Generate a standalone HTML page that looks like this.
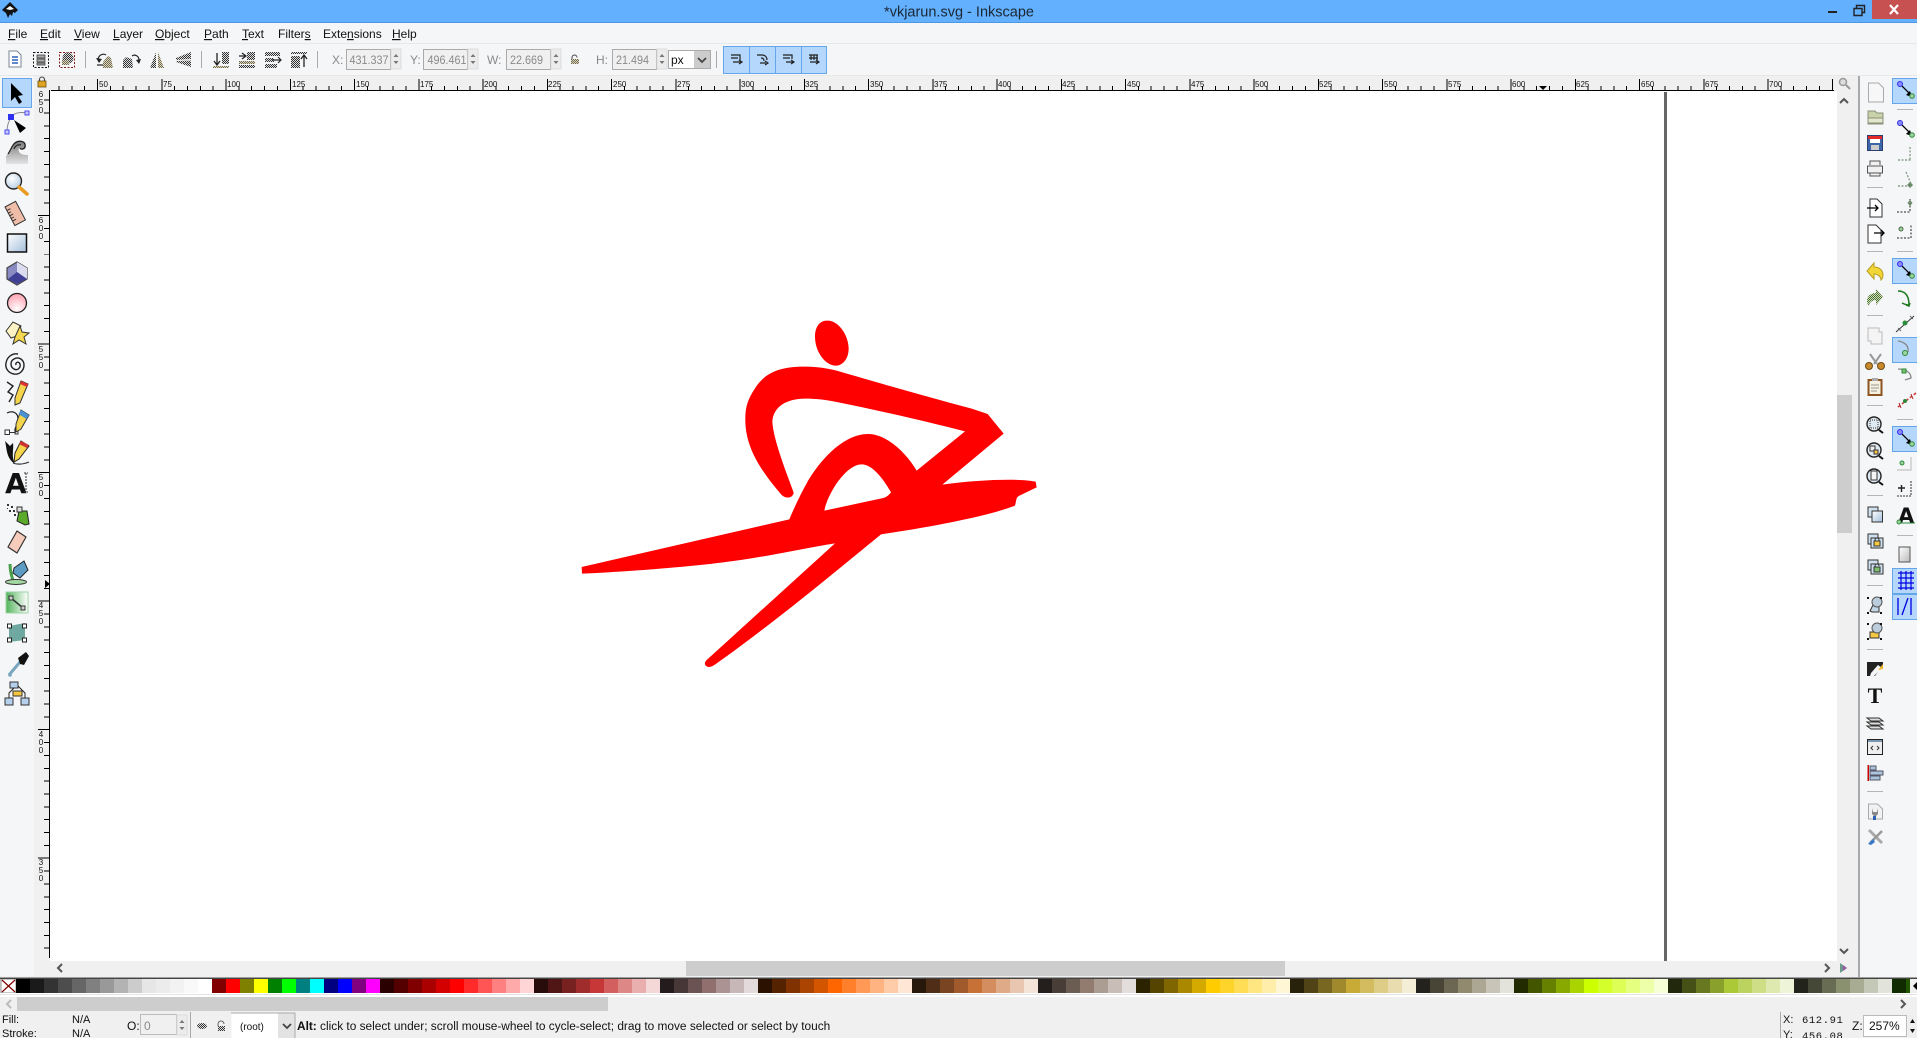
<!DOCTYPE html>
<html><head><meta charset="utf-8"><title>*vkjarun.svg - Inkscape</title>
<style>
html,body{margin:0;padding:0;width:1917px;height:1038px;overflow:hidden;background:#f0f0f0}
#pal{position:absolute;left:16px;top:979px;height:14px;width:1894px;display:flex;overflow:hidden}
#pal i{flex:0 0 14px;height:14px;display:block}
svg{position:absolute;left:0;top:0}
text{font-family:"Liberation Sans",sans-serif}
.m{font-size:12px;fill:#111}
.l{font-size:12px;fill:#8a8a8a}
.v{font-size:12px;fill:#8a8a8a}
.r{font-size:8px;fill:#111}
.s{font-size:11px;fill:#111}
.mono{font-family:"Liberation Mono",monospace;font-size:10.5px;fill:#111;letter-spacing:.6px}
</style></head><body>
<svg width="1917" height="1038" viewBox="0 0 1917 1038" xmlns="http://www.w3.org/2000/svg">
<defs>
<pattern id="d" width="2" height="2" patternUnits="userSpaceOnUse"><rect width="1" height="1" fill="#333"/><rect x="1" y="1" width="1" height="1" fill="#333"/><rect x="1" width="1" height="1" fill="#ddd"/><rect y="1" width="1" height="1" fill="#ddd"/></pattern>
<pattern id="dy" width="2" height="2" patternUnits="userSpaceOnUse"><rect width="2" height="2" fill="#e6d9a8"/><rect width="1" height="1" fill="#666"/><rect x="1" y="1" width="1" height="1" fill="#666"/></pattern>
<pattern id="dg" width="2" height="2" patternUnits="userSpaceOnUse"><rect width="2" height="2" fill="#cfe3b5"/><rect width="1" height="1" fill="#4c6b3a"/><rect x="1" y="1" width="1" height="1" fill="#4c6b3a"/></pattern>
<linearGradient id="gb" x1="0" y1="0" x2="1" y2="1"><stop offset="0" stop-color="#fff"/><stop offset="1" stop-color="#a3bfdb"/></linearGradient>
<linearGradient id="gg" x1="0" y1="0" x2="0" y2="1"><stop offset="0" stop-color="#777"/><stop offset="1" stop-color="#e4e4e4"/></linearGradient>
<linearGradient id="gw" x1="0" y1="0" x2="1" y2="1"><stop offset="0" stop-color="#fff"/><stop offset="1" stop-color="#bbb"/></linearGradient>
<linearGradient id="gr" x1="0" y1="0" x2="1" y2="0"><stop offset="0" stop-color="#52b35c"/><stop offset="1" stop-color="#fff"/></linearGradient>
<radialGradient id="gp" cx=".5" cy=".8" r=".8"><stop offset="0" stop-color="#fff"/><stop offset="1" stop-color="#ff9fae"/></radialGradient>
<radialGradient id="gl" cx=".4" cy=".35" r=".7"><stop offset="0" stop-color="#fff"/><stop offset="1" stop-color="#b5cde2"/></radialGradient>
<clipPath id="chr"><rect x="51" y="76" width="1783" height="15"/></clipPath>
<clipPath id="cvr"><rect x="34" y="91" width="16" height="869"/></clipPath>
<g id="hu" shape-rendering="crispEdges"><path stroke="#000" fill="none" d="M0 79v11M64.25 79v11M12.85 86v4M25.7 86v4M38.55 86v4M51.4 86v4M77.1 86v4M89.95 86v4M102.8 86v4M115.65 86v4"/></g>
<g id="vu" shape-rendering="crispEdges"><path stroke="#000" fill="none" d="M38 0h11M44 12.85h5M44 25.7h5M44 38.55h5M44 51.4h5M44 64.25h5M44 77.1h5M44 89.95h5M44 102.8h5M44 115.65h5"/></g>
<g id="snap"><line x1="-6" y1="-7" x2="4" y2="3" stroke="#000" stroke-width="1.300"/><path d="M6 6l-6-2 4-4z" fill="#000"/><circle cx="-6" cy="-7" r="2.500" fill="#8a8aff" stroke="#3030e0"/><circle cx="6" cy="5" r="2.300" fill="#9fd39f" stroke="#2c8a3c"/></g>
<g id="sepH"><rect x="-8" y="0" width="16" height="1" fill="#b5b5b5"/></g>
<g id="spin"><rect width="10" height="20" fill="#ececec" stroke="#dcdcdc"/><path d="M2.500 8l2.500-3 2.500 3zM2.500 12l2.500 3 2.500-3z" fill="#777"/></g>
</defs>

<!-- base regions -->
<rect width="1917" height="1038" fill="#f0f0f0"/>
<rect width="1917" height="22" fill="#62b0fe"/>
<rect y="22" width="1917" height="1" fill="#4f97e0"/>
<rect y="23" width="1917" height="52" fill="#f5f6f7"/>
<rect y="43" width="1917" height="1" fill="#e7e8e9"/>
<rect y="75" width="1917" height="1" fill="#e8e8e8"/>
<rect x="0" y="76" width="34" height="900" fill="#f5f6f7"/>
<rect x="1859" y="76" width="58" height="902" fill="#f5f6f7"/>
<rect x="1858" y="76" width="2" height="902" fill="#a9a9a9"/>
<rect x="50" y="91" width="1787" height="870" fill="#fff"/>
<rect x="49" y="90" width="1" height="868" fill="#000"/>
<rect x="51" y="90" width="1783" height="1" fill="#000"/>
<rect x="1664" y="92" width="3" height="869" fill="#666"/>

<!-- scrollbars -->
<rect x="1837" y="395" width="15" height="138" fill="#cdcdcd"/>
<rect x="686" y="961" width="599" height="15" fill="#cdcdcd"/>
<path d="M1840 103l4-4 4 4M1840 949l4 4 4-4M62 964l-4 4 4 4M1825 964l4 4-4 4" fill="none" stroke="#555" stroke-width="2"/>
<circle cx="1843" cy="82" r="3.500" fill="#ddd" stroke="#999" stroke-width="1.500"/><path d="M1846 85l4 4" stroke="#999" stroke-width="2"/>
<path d="M1840 963l7 5-7 5z" fill="#6a9a8a"/><path d="M1843 965l4 3-4 3z" fill="#9a5aa0"/>

<!-- palette -->
<rect y="977" width="1917" height="1" fill="#a0a0a0"/>
<rect y="978" width="1917" height="1" fill="#444"/>
<rect x="1" y="979" width="15" height="14" fill="#fff"/>
<path d="M2 980l13 12M15 980L2 992" stroke="#800000" stroke-width="1.200"/>
<rect x="1" y="979" width="15" height="14" fill="none" stroke="#444" stroke-width=".6"/>
<rect y="993" width="1917" height="4" fill="#fff"/>
<rect y="994" width="1917" height="1" fill="#e4e4e4"/>
<path d="M1917 982l-4 4 4 4z" fill="#000"/>
<rect x="17" y="997" width="591" height="14" fill="#cdcdcd"/>
<path d="M11 1000l-4 4 4 4" fill="none" stroke="#bbb" stroke-width="2"/>
<path d="M1901 1000l4 4-4 4" fill="none" stroke="#555" stroke-width="2"/>

<!-- title -->
<path d="M10 2L18 10 15 13 13 12 12 16 10 14 8 18 6 13 2 10z" fill="#111"/><path d="M6 9l4-3 4 3-4 1z" fill="#fff"/>
<text x="959" y="16.500" text-anchor="middle" style="font-size:14.500px;fill:#1b2733">*vkjarun.svg - Inkscape</text>
<rect x="1828" y="11" width="9" height="2" fill="#222"/>
<path d="M1854 8.500h8v7h-8zM1856.500 8.500v-3h8v7h-3" fill="none" stroke="#222" stroke-width="1.400"/>
<rect x="1872" width="45" height="19" fill="#c75050"/>
<path d="M1890 5l8 9M1898 5l-8 9" stroke="#fff" stroke-width="2.200"/>

<!-- menu -->
<text class="m" x="8" y="38"><tspan text-decoration="underline">F</tspan>ile</text>
<text class="m" x="40" y="38"><tspan text-decoration="underline">E</tspan>dit</text>
<text class="m" x="74" y="38"><tspan text-decoration="underline">V</tspan>iew</text>
<text class="m" x="113" y="38"><tspan text-decoration="underline">L</tspan>ayer</text>
<text class="m" x="155" y="38"><tspan text-decoration="underline">O</tspan>bject</text>
<text class="m" x="204" y="38"><tspan text-decoration="underline">P</tspan>ath</text>
<text class="m" x="242" y="38"><tspan text-decoration="underline">T</tspan>ext</text>
<text class="m" x="278" y="38">Filter<tspan text-decoration="underline">s</tspan></text>
<text class="m" x="323" y="38">Exte<tspan text-decoration="underline">n</tspan>sions</text>
<text class="m" x="392" y="38"><tspan text-decoration="underline">H</tspan>elp</text>

<!-- top toolbar icons -->
<path d="M9 51h8l4 4v12H9z" fill="#fff" stroke="#7a8794"/><path d="M12 57h6M12 60h6M12 63h6" stroke="#2a62b8" stroke-width="1.500"/>
<rect x="33.500" y="52.500" width="15" height="15" fill="none" stroke="#111" stroke-dasharray="2 1.500"/>
<path d="M37 55h8v3h-8zM37 59h8v3h-8zM37 63h8v2h-8z" fill="#aaa" stroke="#333" stroke-width=".7"/>
<rect x="59.500" y="52.500" width="15" height="15" fill="none" stroke="#8a1c1c" stroke-dasharray="2 1.500"/>
<circle cx="68" cy="58" r="5.500" fill="url(#d)"/><rect x="62" y="60" width="7" height="5" fill="url(#dy)"/>
<rect x="85" y="51" width="1" height="17" fill="#aaa"/>
<path d="M103 68h10l-2-10-3-2-5 6z" fill="url(#dy)"/><path d="M98 59c1-4 5-6 8-4" fill="none" stroke="#222" stroke-width="1.200"/><path d="M96 58l3 5 3-4z" fill="#222"/><path d="M97 65h6" stroke="#333" stroke-width="1.300"/>
<path d="M123 68h10l-1-9-6-2-3 3z" fill="url(#d)"/><path d="M132 56c3-2 7 0 7 4" fill="none" stroke="#222" stroke-width="1.200"/><path d="M136 60l3 4 2-5z" fill="#222"/>
<path d="M156 52v16l-6 0z" fill="url(#d)"/><path d="M158 52v16l6 0z" fill="url(#dy)"/>
<path d="M191 52L176 58v2l15-1z" fill="url(#d)"/><path d="M191 60.500L176 61v1l15 5z" fill="url(#d)"/>
<rect x="201" y="51" width="1" height="17" fill="#aaa"/>
<path d="M217 53v11M214 61l3 4 3-4" stroke="#222" fill="none" stroke-width="1.300"/><rect x="213" y="66" width="16" height="2" fill="url(#dy)"/><rect x="222" y="52" width="7" height="12" fill="url(#d)"/>
<path d="M239 56h6M242 53l4 3-4 3" stroke="#222" fill="none" stroke-width="1.200"/><rect x="247" y="52" width="8" height="8" fill="url(#d)"/><rect x="239" y="61" width="16" height="3" fill="url(#dy)"/><rect x="239" y="65" width="16" height="3" fill="url(#d)"/>
<rect x="265" y="52" width="15" height="4" fill="url(#d)"/><rect x="265" y="58" width="9" height="4" fill="url(#d)"/><rect x="265" y="64" width="12" height="4" fill="url(#d)"/><path d="M272 60h8M278 57l3 3-3 3" stroke="#222" fill="none" stroke-width="1.200"/>
<rect x="291" y="52" width="16" height="2" fill="url(#d)"/><rect x="291" y="56" width="9" height="12" fill="url(#d)"/><path d="M304 67V56M301 59l3-4 3 4" stroke="#222" fill="none" stroke-width="1.300"/>
<rect x="317" y="51" width="1" height="17" fill="#aaa"/>

<text class="l" x="332" y="64">X:</text>
<rect x="346.500" y="49.500" width="44" height="20" fill="#f0f0f0" stroke="#aaa"/><text class="v" x="349.500" y="64" textLength="39" lengthAdjust="spacingAndGlyphs">431.337</text><use href="#spin" x="391" y="49"/>
<text class="l" x="410" y="64">Y:</text>
<rect x="423.500" y="49.500" width="44" height="20" fill="#f0f0f0" stroke="#aaa"/><text class="v" x="427.500" y="64" textLength="39" lengthAdjust="spacingAndGlyphs">496.461</text><use href="#spin" x="468" y="49"/>
<text class="l" x="487" y="64">W:</text>
<rect x="506.500" y="49.500" width="44" height="20" fill="#f0f0f0" stroke="#aaa"/><text class="v" x="510" y="64" textLength="33" lengthAdjust="spacingAndGlyphs">22.669</text><use href="#spin" x="551" y="49"/>
<path d="M572 59v-1.500a2.500 2.500 0 0 1 5 0" fill="none" stroke="#444"/><rect x="571" y="59" width="8" height="5" fill="url(#dy)"/>
<text class="l" x="596" y="64">H:</text>
<rect x="612.500" y="49.500" width="44" height="20" fill="#f0f0f0" stroke="#aaa"/><text class="v" x="616" y="64" textLength="33" lengthAdjust="spacingAndGlyphs">21.494</text><use href="#spin" x="657" y="49"/>
<rect x="668.500" y="50.500" width="42" height="18" fill="#fff" stroke="#aaa"/><text x="671" y="64" style="font-size:12px;fill:#111">px</text>
<rect x="694" y="51" width="16" height="17" fill="#ccc"/><path d="M698 58l4 4 4-4" fill="none" stroke="#444" stroke-width="1.800"/>
<rect x="716" y="51" width="1" height="17" fill="#aaa"/>
<g fill="#b5d7fb" stroke="#63a6eb"><rect x="723.500" y="46.500" width="26" height="27"/><rect x="749.500" y="46.500" width="26" height="27"/><rect x="775.500" y="46.500" width="26" height="27"/><rect x="801.500" y="46.500" width="25" height="27"/></g>
<g stroke="#222" fill="none" stroke-width="1.200">
<path d="M731 55h9v5M731 58h7M733 62h8M739 60l3 2-3 2"/>
<path d="M757 55h5c3 0 5 2 5 5M761 58c2 0 3 1 3 3M760 63h6M765 61l3 2-3 2"/>
<path d="M783 55h9v4M783 58h7M786 62h7M791 60l3 2-3 2"/>
<path d="M809 55h9M809 58h9M811 55v5M814 55v5M817 55v5M810 62h8M816 60l3 2-3 2"/>
</g>

<!-- rulers -->
<g clip-path="url(#chr)">
<use href="#hu" x="-31"/><use href="#hu" x="97.500"/><use href="#hu" x="226"/><use href="#hu" x="354.500"/><use href="#hu" x="483"/><use href="#hu" x="611.500"/><use href="#hu" x="740"/><use href="#hu" x="868.500"/><use href="#hu" x="997"/><use href="#hu" x="1125.500"/><use href="#hu" x="1254"/><use href="#hu" x="1382.500"/><use href="#hu" x="1511"/><use href="#hu" x="1639.500"/><use href="#hu" x="1768"/>
<text class="r" x="99" y="87">50</text><text class="r" x="163" y="87">75</text><text class="r" x="227" y="87">100</text><text class="r" x="292" y="87">125</text><text class="r" x="356" y="87">150</text><text class="r" x="420" y="87">175</text><text class="r" x="484" y="87">200</text><text class="r" x="548" y="87">225</text><text class="r" x="613" y="87">250</text><text class="r" x="677" y="87">275</text><text class="r" x="741" y="87">300</text><text class="r" x="805" y="87">325</text><text class="r" x="870" y="87">350</text><text class="r" x="934" y="87">375</text><text class="r" x="998" y="87">400</text><text class="r" x="1062" y="87">425</text><text class="r" x="1127" y="87">450</text><text class="r" x="1191" y="87">475</text><text class="r" x="1255" y="87">500</text><text class="r" x="1319" y="87">525</text><text class="r" x="1384" y="87">550</text><text class="r" x="1448" y="87">575</text><text class="r" x="1512" y="87">600</text><text class="r" x="1576" y="87">625</text><text class="r" x="1641" y="87">650</text><text class="r" x="1705" y="87">675</text><text class="r" x="1769" y="87">700</text><text class="r" x="1834" y="87">725</text>
</g>
<path d="M1539 86h8l-4 4z" fill="#000"/>
<g clip-path="url(#cvr)">
<use href="#vu" y="87.200"/><use href="#vu" y="215.700"/><use href="#vu" y="344.200"/><use href="#vu" y="472.700"/><use href="#vu" y="601.200"/><use href="#vu" y="729.700"/><use href="#vu" y="858.200"/>
<g text-anchor="middle">
<text class="r" x="41" y="97">6</text><text class="r" x="41" y="105">5</text><text class="r" x="41" y="113">0</text>
<text class="r" x="41" y="223">6</text><text class="r" x="41" y="231">0</text><text class="r" x="41" y="239">0</text>
<text class="r" x="41" y="352">5</text><text class="r" x="41" y="360">5</text><text class="r" x="41" y="368">0</text>
<text class="r" x="41" y="480">5</text><text class="r" x="41" y="488">0</text><text class="r" x="41" y="496">0</text>
<text class="r" x="41" y="608">4</text><text class="r" x="41" y="616">5</text><text class="r" x="41" y="624">0</text>
<text class="r" x="41" y="737">4</text><text class="r" x="41" y="745">0</text><text class="r" x="41" y="753">0</text>
<text class="r" x="41" y="865">3</text><text class="r" x="41" y="873">5</text><text class="r" x="41" y="881">0</text>
</g>
</g>
<path d="M45 580l5 4-5 4z" fill="#000"/>
<rect x="38" y="81" width="8" height="6" fill="#e0a320" stroke="#6a4a10" stroke-width=".8"/><path d="M39.500 81v-1.500a2.500 2.500 0 0 1 5 0V81" fill="none" stroke="#444" stroke-width="1.100"/>

<!-- logo -->
<g transform="translate(560 300) scale(.33333)" fill="#ff0000">
<path d="M800 62C830 58 865 100 866 145C866 180 845 198 825 197C795 195 765 155 765 110C765 80 780 62 800 62Z"/>
<path fill-rule="evenodd" d="M700 575C680 520 640 420 637 365C640 320 680 296 735 296C770 296 800 300 830 306C950 330 1090 362 1215 394L1070 512C1040 460 980 402 925 402C850 402 780 480 740 550C715 595 700 630 688 658L65 801L66 821C200 815 400 800 520 783C620 770 730 745 825 730L440 1080C430 1090 435 1100 447 1101C455 1100 460 1097 470 1090C640 970 820 820 963 703C1100 683 1280 650 1365 617L1370 595C1372 590 1376 588 1380 586L1430 562L1427 545C1380 535 1260 538 1147 554L1331 401L1283 342L1235 326C1100 290 960 250 830 212C790 202 760 200 730 200C650 200 610 225 585 265C565 295 555 320 556 360C556 440 600 510 665 585C675 595 695 597 701 580ZM793 632C805 575 860 493 905 493C940 493 975 545 993 577C985 587 978 592 970 594Z"/>
</g>

<!-- left toolbox -->
<rect x="2.500" y="78.500" width="29" height="29" fill="#b5d7fb" stroke="#63a6eb"/>
<path d="M11 83L11 101 15 97 19 104 22 102 18 96 23 95Z" fill="#000"/>
<path d="M11 117C15 112 21 112 27 113M11 118C8 122 7 127 7 132" fill="none" stroke="#888"/>
<rect x="8" y="114" width="6" height="6" fill="#3030f0"/><rect x="25" y="111" width="4" height="4" fill="#c9c9ff" stroke="#4a4af0"/><rect x="5" y="130" width="4" height="4" fill="#c9c9ff" stroke="#4a4af0"/>
<path d="M14 120L26 128 20 133Z" fill="#000"/>
<path d="M6 164V156C10 152 11 145 15 142C19 139 26 141 26 146C26 150 21 151 20 148C18 148 18 151 20 153C22 155 26 155 28 155V164Z" fill="url(#gg)"/>
<path d="M8 154C11 150 12 145 15 143C19 140 26 141 25 146C25 149 21 150 20 148M14 149C15 146 18 144 21 145" fill="none" stroke="#222" stroke-width="1.300"/>
<circle cx="13.500" cy="181" r="8" fill="url(#gl)" stroke="#222" stroke-width="1.400"/><path d="M19 187l8 7" stroke="#e89b20" stroke-width="3.500" stroke-linecap="round"/>
<g transform="rotate(-28 15 213)"><rect x="9" y="203" width="12" height="21" fill="#efbda8" stroke="#333"/><path d="M9 207h4M9 210h3M9 213h4M9 216h3M9 219h4" stroke="#333"/></g>
<rect x="7.500" y="234" width="19" height="18" fill="url(#gb)" stroke="#111" stroke-width="1.500"/>
<path d="M17 262L27 268V279L17 285 7 279V268Z" fill="#8b8bc4" stroke="#444" stroke-width="1.200"/><path d="M17 262L27 268V279L17 272Z" fill="#dcdcf0"/><path d="M8 279L17 272 27 279 17 284Z" fill="#3f3f96"/>
<circle cx="17" cy="303" r="9.500" fill="url(#gp)" stroke="#222" stroke-width="1.300"/>
<path d="M6 331L13 322 21 326 17 336 11 338Z" fill="#fcf2c4" stroke="#333"/><path d="M20 326L22 332 29 333 24 337 26 344 19 340 13 344 15 337Z" fill="#f5d84f" stroke="#333"/>
<path d="M16 365c-1-3 3-4 4-1 1 4-3 7-6 5-4-2-4-8 0-10 5-3 10 1 10 6 0 6-5 10-10 9-6-1-9-6-8-11 1-6 6-10 12-9" fill="none" stroke="#222" stroke-width="1.400"/>
<path d="M7 382l6 4-5 6 5 3-4 7" fill="none" stroke="#222" stroke-width="1.400"/><path d="M21 381l7 3-8 19-5 2 0-7z" fill="#f3d44c" stroke="#333"/><path d="M21 381l7 3-1 3-7-3z" fill="#d33"/>
<path d="M7 413C13 410 18 413 18 419C18 425 14 428 15 431" fill="none" stroke="#222" stroke-width="1.200"/><rect x="5" y="430" width="4.500" height="4.500" fill="#fff" stroke="#333"/><rect x="15" y="431" width="3" height="3" fill="#fff" stroke="#333"/><path d="M9 432.500h6" stroke="#333"/>
<path d="M21 410l8 5-8 14-5 3 0-8z" fill="#f3d44c" stroke="#333"/><path d="M21 410l8 5-2.500 4-8-5z" fill="#4a8fd0"/>
<path d="M5 441C7 449 6 458 15 464C11 456 14 450 13 443L10 446Z" fill="#111"/><path d="M21 441l8 5-10 13-5 3 1-9z" fill="#f3d44c" stroke="#222"/><path d="M21 441l8 4-2 3-8-4z" fill="#c33"/><path d="M13 463c5 2 11 1 16-1" fill="none" stroke="#333" stroke-width="1.200"/>
<text x="5" y="493" style="font-family:'DejaVu Sans',sans-serif;font-weight:700;font-size:28px;fill:#111">A</text>
<path d="M26 473v19M24 473h4M24 492h4" stroke="#333" stroke-dasharray="2 1"/>
<path d="M19 511h8l2 13-4 1-8-4z" fill="#5caa2c" stroke="#222"/><rect x="17" y="507" width="5" height="5" fill="#ddd" stroke="#333"/>
<g fill="#333"><rect x="7" y="504" width="2" height="2"/><rect x="11" y="506" width="2" height="2"/><rect x="9" y="510" width="2" height="2"/><rect x="13" y="510" width="2" height="2"/><rect x="7" y="508" width="1" height="1"/><rect x="14" y="514" width="2" height="2"/></g>
<path d="M17 531L26 537 17 553 8 547Z" fill="#f6ccbc" stroke="#333" stroke-width="1.200" stroke-linejoin="round"/>
<path d="M14 568L24 561 28 570 20 578 13 573Z" fill="#5f9cc4" stroke="#222"/><path d="M10 564C10 572 12 578 14 583" fill="none" stroke="#4aa04a" stroke-width="3"/><ellipse cx="16" cy="582" rx="10.500" ry="2.500" fill="#a3d8a3" stroke="#333"/>
<rect x="6" y="592" width="22" height="21" fill="url(#gr)" stroke="#9fd4a4"/><path d="M11 598L23 608" stroke="#333" stroke-width="1.500"/><rect x="9" y="596" width="4" height="4" fill="#ccc" stroke="#333"/><rect x="21" y="606" width="4" height="4" fill="#ccc" stroke="#333"/>
<path d="M9 626L25 623 25 640 9 642Z" fill="#6fa8a0"/><g fill="#fff" stroke="#222"><rect x="7.500" y="624" width="4" height="4"/><rect x="22.500" y="624" width="4" height="4"/><rect x="7.500" y="638" width="4" height="4"/><rect x="22.500" y="638" width="4" height="4"/></g>
<path d="M9 675L20 662" stroke="#7aa5bf" stroke-width="3"/><circle cx="10" cy="675" r="1.800" fill="#7aa5bf"/><path d="M18 658L26 652 29 656 24 665 20 664Z" fill="#111"/>
<rect x="10" y="682" width="8" height="6" fill="#b5d0ec" stroke="#333"/><rect x="5" y="698" width="8" height="7" fill="#b5d0ec" stroke="#333"/><rect x="21" y="698" width="8" height="7" fill="#b5d0ec" stroke="#333"/><rect x="13" y="691" width="9" height="5" fill="#f5c842" stroke="#333"/><path d="M9 698V693L14 688M25 698V693L18 686" fill="none" stroke="#222"/>

<!-- right commands -->
<path d="M1868.500 83h10l5 5v14h-15z" fill="#f7f7f7" stroke="#aaa"/>
<path d="M1868 111h7l2 2h6v11h-15z" fill="#c8d2a8" stroke="#8c9078"/><path d="M1868 118h15v5h-15z" fill="#e2e6cc" stroke="#8c9078"/>
<rect x="1867.500" y="135.500" width="15" height="15" fill="#3d66a8" stroke="#2a3f70"/><rect x="1868" y="136" width="14" height="3" fill="#e32a2a"/><rect x="1870" y="139" width="10" height="4" fill="#fff"/><rect x="1871" y="145" width="8" height="5" fill="#ccc"/>
<path d="M1870 165v-4h10v4M1867.500 166h15v7h-15zM1870 173v3h10v-3" fill="#f0f0f0" stroke="#555"/>
<use href="#sepH" x="1875" y="187"/>
<path d="M1870 199h7l5 5v13h-12z" fill="#fff" stroke="#333"/><path d="M1867 208h11M1875 205l3 3-3 3" stroke="#000" stroke-width="1.300" fill="none"/>
<path d="M1868 225h8l5 5v13h-13z" fill="#fff" stroke="#333"/><path d="M1874 233h10M1881 230l3 3-3 3" stroke="#000" stroke-width="1.300" fill="none"/>
<use href="#sepH" x="1875" y="251"/>
<path d="M1867 271l7-8v4c5 0 9 3 9 8 0 2-1 4-2 5 0-3-3-6-7-6v5z" fill="#f2d637" stroke="#b79d20"/>
<path d="M1883 297l-7-8v4c-5 0-9 3-9 8 0 2 1 4 2 5 0-3 3-6 7-6v5z" fill="url(#dg)"/>
<use href="#sepH" x="1875" y="315"/>
<path d="M1868 328h11v4h3v12h-11v-3h-3z" fill="#f4f4f4" stroke="#bbb"/>
<path d="M1870 354l7 10M1881 354l-7 10" stroke="#999" stroke-width="2"/><circle cx="1869" cy="366" r="3.500" fill="#c98a2a" stroke="#6b4a18"/><circle cx="1881" cy="366" r="3.500" fill="#c98a2a" stroke="#6b4a18"/>
<rect x="1868.500" y="380" width="13" height="15" fill="#f5f0e0" stroke="#8c5420" stroke-width="2"/><rect x="1872" y="378" width="6" height="3" fill="#aaa"/><path d="M1871 385h8M1871 388h8M1871 391h6" stroke="#999"/>
<use href="#sepH" x="1875" y="405"/>
<circle cx="1874" cy="424" r="7" fill="#dfe9f2" stroke="#222" stroke-width="1.400"/><rect x="1870" y="420" width="8" height="8" fill="none" stroke="#333" stroke-dasharray="1 1"/><path d="M1879 430l4 3" stroke="#111" stroke-width="2"/>
<circle cx="1874" cy="450" r="7" fill="#dfe9f2" stroke="#222" stroke-width="1.400"/><rect x="1870" y="446" width="5" height="5" fill="#eee" stroke="#333"/><rect x="1874" y="450" width="4" height="4" fill="#f5c842" stroke="#333"/><path d="M1879 456l4 3" stroke="#111" stroke-width="2"/>
<circle cx="1874" cy="476" r="7" fill="#dfe9f2" stroke="#222" stroke-width="1.400"/><rect x="1871" y="471" width="6" height="9" fill="#f5f5f5" stroke="#333"/><path d="M1879 482l4 3" stroke="#111" stroke-width="2"/>
<use href="#sepH" x="1875" y="495"/>
<rect x="1868" y="507" width="10" height="10" fill="#cfe0ef" stroke="#333"/><rect x="1872" y="511" width="10.500" height="11" fill="url(#gb)" stroke="#333"/>
<rect x="1868" y="534" width="10" height="10" fill="#cfe0ef" stroke="#333"/><rect x="1871" y="538" width="12" height="10" fill="#cfe0ef" stroke="#333"/><rect x="1874" y="541" width="6" height="5" fill="#f5c842" stroke="#333"/><path d="M1875 541v-1a2 2 0 0 1 4 0v1" fill="none" stroke="#333"/>
<rect x="1868" y="560" width="10" height="10" fill="#cfe0ef" stroke="#333"/><rect x="1871" y="564" width="12" height="10" fill="#cfe0ef" stroke="#333"/><rect x="1874" y="567" width="6" height="5" fill="#7cc06c" stroke="#333"/><path d="M1875 567v-1a2 2 0 0 1 4 0" fill="none" stroke="#333"/>
<use href="#sepH" x="1875" y="585"/>
<path d="M1870 611l3-6h6v7h-7z" fill="#c2d6e8" stroke="#333"/><circle cx="1877" cy="602" r="5" fill="#bcd" stroke="#555"/><g fill="#111"><rect x="1867" y="597" width="2" height="2"/><rect x="1880" y="597" width="2" height="2"/><rect x="1867" y="612" width="2" height="2"/><rect x="1880" y="612" width="2" height="2"/></g>
<rect x="1870" y="632" width="9" height="6" fill="#f5c842" stroke="#333"/><circle cx="1877" cy="628" r="5" fill="#bcd" stroke="#555"/><g fill="#111"><rect x="1867" y="623" width="2" height="2"/><rect x="1880" y="623" width="2" height="2"/><rect x="1867" y="638" width="2" height="2"/><rect x="1880" y="638" width="2" height="2"/></g>
<use href="#sepH" x="1875" y="649"/>
<path d="M1867 662h16v3l-8 11h-8z" fill="#222"/><path d="M1870 676l1-3 7-8 4 3-8 8z" fill="#f5f5f5"/><path d="M1878 670l5-6v5z" fill="#f2b62a"/>
<text x="1875" y="703" text-anchor="middle" style="font-family:'Liberation Serif',serif;font-weight:700;font-size:22px;fill:#111">T</text>
<g fill="#ddd" stroke="#333"><path d="M1867 726h12l4 3h-12z"/><path d="M1867 722h12l4 3h-12z"/><path d="M1867 718h12l4 3h-12z"/></g>
<rect x="1867.500" y="739.500" width="15" height="15" fill="#eee" stroke="#222"/><rect x="1868" y="740" width="14" height="2" fill="#7a96b0"/><path d="M1873 746l-2 2 2 2M1877 746l2 2-2 2" fill="none" stroke="#333"/>
<rect x="1867.500" y="765" width="1.500" height="16" fill="#c00"/><rect x="1870" y="766" width="6" height="4" fill="#a9c4dc" stroke="#556"/><rect x="1870" y="771" width="13" height="4" fill="#a9c4dc" stroke="#556"/><rect x="1870" y="776" width="10" height="4" fill="#a9c4dc" stroke="#556"/>
<use href="#sepH" x="1875" y="791"/>
<path d="M1868.500 804h9l5 5v10h-14z" fill="#f2f2f2" stroke="#aaa"/><path d="M1872 808v6l2 2v4h2v-4l2-2v-6l-1 4h-4z" fill="#888"/><rect x="1873" y="816" width="3" height="4" fill="#2a62b8"/>
<path d="M1869 830l13 13" stroke="#aaa" stroke-width="3"/><path d="M1882 831l-12 12" stroke="#999" stroke-width="2.500"/><path d="M1868 844l5-5 2 3-4 3z" fill="#3a78c8"/>

<!-- snap column -->
<g fill="#b5d7fb" stroke="#63a6eb"><rect x="1892.500" y="78.500" width="25" height="25"/><rect x="1892.500" y="258.500" width="25" height="25"/><rect x="1892.500" y="337.500" width="25" height="25"/><rect x="1892.500" y="426.500" width="25" height="25"/><rect x="1892.500" y="568.500" width="25" height="25"/><rect x="1892.500" y="594.500" width="25" height="25"/></g>
<use href="#snap" x="1906" y="91"/><use href="#sepH" x="1905" y="109"/><use href="#snap" x="1906" y="130"/>
<path d="M1898 160h14M1910 147v13" stroke="#8aa08a" stroke-dasharray="2 1.500" fill="none" stroke-width="1.400"/>
<path d="M1898 186h14M1906 172l6 14" stroke="#8aa08a" stroke-dasharray="2 1.500" fill="none" stroke-width="1.400"/><path d="M1910 182l3 3-3 3-3-3z" fill="#6a8a6a"/>
<path d="M1897 212h13v-13" stroke="#222" stroke-dasharray="2 1.500" fill="none"/><path d="M1910 200l2.500 3-2.500 3-2.500-3z" fill="#6a8a6a"/>
<path d="M1897 238h14v-13" stroke="#222" stroke-dasharray="2 1.500" fill="none"/><circle cx="1901" cy="229" r="2" fill="#9fd39f" stroke="#4a6a4a"/>
<use href="#sepH" x="1905" y="251"/><use href="#snap" x="1906" y="271"/>
<path d="M1898 291c7 0 11 4 11 14-2 0-5-1-7-2M1906 305l3 1 1-3" fill="none" stroke="#1f7a1f" stroke-width="1.500"/>
<path d="M1896 332l18-16" stroke="#333"/><circle cx="1905" cy="323" r="2.500" fill="#2c8a3c"/><path d="M1898 328l3 3M1910 316l3 3" stroke="#666"/>
<path d="M1898 341c7 1 11 5 10 11" fill="none" stroke="#888" stroke-width="1.300"/><circle cx="1905" cy="353" r="2.500" fill="#9fd39f" stroke="#2c8a3c"/>
<path d="M1898 369c7 0 13 3 13 9-2 1-4 1-6 2" fill="none" stroke="#888" stroke-width="1.300"/><rect x="1902" y="369" width="4" height="4" fill="#7cc06c" stroke="#2c8a3c"/>
<path d="M1898 407l18-14" stroke="#c33" stroke-width="1.500" stroke-dasharray="3 2"/><circle cx="1905" cy="401" r="2" fill="#2c8a3c"/><path d="M1899 403l2 5M1911 394l2 5" stroke="#a22"/>
<use href="#sepH" x="1905" y="419"/><use href="#snap" x="1906" y="439"/>
<circle cx="1902" cy="463" r="2" fill="#9fd39f" stroke="#2c8a3c"/><path d="M1897 470h14v-13" fill="none" stroke="#ccc" stroke-width="1.400"/>
<path d="M1898 488h7M1901.500 485v7" stroke="#222" stroke-width="1.400"/><path d="M1897 496h14v-15" fill="none" stroke="#333" stroke-dasharray="2 1"/>
<text x="1898" y="523" style="font-weight:700;font-size:21px;fill:#111;font-family:'DejaVu Sans',sans-serif">A</text><circle cx="1899" cy="522" r="2" fill="#9fd39f" stroke="#2c8a3c"/><path d="M1901 523h14" stroke="#2c8a3c"/>
<use href="#sepH" x="1905" y="535"/>
<rect x="1899" y="547" width="11" height="15" fill="url(#gw)" stroke="#555"/>
<path d="M1898 573h16M1898 578h16M1898 583h16M1898 588h16M1901 571v19M1906 571v19M1911 571v19" stroke="#0000e0" stroke-width="1.200" fill="none"/>
<path d="M1898 598v17M1902 615l6-17M1911 598v17" stroke="#0000e0" stroke-width="1.300" fill="none"/>

<!-- status -->
<rect x="0" y="1012" width="1917" height="26" fill="#f0f0f0"/>
<text class="s" x="2" y="1023">Fill:</text><text class="s" x="2" y="1037">Stroke:</text>
<text class="s" x="72" y="1023">N/A</text><text class="s" x="72" y="1037">N/A</text>
<text class="s" x="127" y="1030" style="font-size:12px">O:</text>
<rect x="140.500" y="1014.500" width="36" height="20" fill="#f0f0f0" stroke="#bbb"/><text x="144" y="1030" style="font-size:12px;fill:#8a8a8a">0</text><use href="#spin" x="177" y="1015"/>
<rect x="190" y="1012" width="1" height="26" fill="#aaa"/>
<ellipse cx="202" cy="1026" rx="5" ry="3" fill="url(#d)"/>
<path d="M218 1026v-2a3 3 0 0 1 6 0" fill="none" stroke="#666"/><rect x="218" y="1026" width="7" height="5" fill="url(#d)"/>
<rect x="231.500" y="1013" width="63" height="25" fill="#fff"/><rect x="278" y="1013" width="17" height="25" fill="#e3e3e3"/><path d="M231 1013h64v25" fill="none" stroke="#aaa"/>
<text x="240" y="1030" style="font-size:10px;fill:#111">(root)</text>
<path d="M283 1024l4 4 4-4" fill="none" stroke="#444" stroke-width="1.800"/>
<text x="297" y="1030" style="font-size:11.870px;fill:#111"><tspan font-weight="700">Alt:</tspan> click to select under; scroll mouse-wheel to cycle-select; drag to move selected or select by touch</text>
<rect x="1780" y="1012" width="1" height="26" fill="#aaa"/>
<text class="s" x="1783" y="1023">X:</text><text class="s" x="1783" y="1038">Y:</text>
<text class="mono" x="1802" y="1023">612.91</text><text class="mono" x="1802" y="1039">456.08</text>
<text class="s" x="1852" y="1030" style="font-size:12px">Z:</text>
<rect x="1863.500" y="1015.500" width="43" height="21" fill="#fff" stroke="#bbb"/><text x="1869" y="1030" style="font-size:12px;fill:#111">257%</text>
<rect x="1908" y="1015" width="9" height="10" fill="#eee"/><rect x="1908" y="1027" width="9" height="10" fill="#eee"/><path d="M1910 1023l2.500-4 2.500 4zM1910 1029l2.500 4 2.500-4z" fill="#111"/>
</svg>
<div id="pal"><i style="background:#000"></i><i style="background:#1a1a1a"></i><i style="background:#333"></i><i style="background:#4d4d4d"></i><i style="background:#666"></i><i style="background:#808080"></i><i style="background:#999"></i><i style="background:#b3b3b3"></i><i style="background:#ccc"></i><i style="background:#e6e6e6"></i><i style="background:#ececec"></i><i style="background:#f2f2f2"></i><i style="background:#f9f9f9"></i><i style="background:#fff"></i><i style="background:#800000"></i><i style="background:#f00"></i><i style="background:#808000"></i><i style="background:#ff0"></i><i style="background:#008000"></i><i style="background:#0f0"></i><i style="background:#008080"></i><i style="background:#0ff"></i><i style="background:#000080"></i><i style="background:#00f"></i><i style="background:#800080"></i><i style="background:#f0f"></i><i style="background:#2b0000"></i><i style="background:#500"></i><i style="background:#800000"></i><i style="background:#a00"></i><i style="background:#d40000"></i><i style="background:#f00"></i><i style="background:#ff2a2a"></i><i style="background:#f55"></i><i style="background:#ff8080"></i><i style="background:#faa"></i><i style="background:#ffd5d5"></i><i style="background:#280b0b"></i><i style="background:#501616"></i><i style="background:#782121"></i><i style="background:#a02c2c"></i><i style="background:#c83737"></i><i style="background:#d35f5f"></i><i style="background:#de8787"></i><i style="background:#e9afaf"></i><i style="background:#f4d7d7"></i><i style="background:#241c1c"></i><i style="background:#483737"></i><i style="background:#6c5353"></i><i style="background:#916f6f"></i><i style="background:#ac9393"></i><i style="background:#c8b7b7"></i><i style="background:#e3dbdb"></i><i style="background:#2b1100"></i><i style="background:#520"></i><i style="background:#803300"></i><i style="background:#a40"></i><i style="background:#d45500"></i><i style="background:#f60"></i><i style="background:#ff7f2a"></i><i style="background:#f95"></i><i style="background:#ffb380"></i><i style="background:#fca"></i><i style="background:#ffe6d5"></i><i style="background:#28170b"></i><i style="background:#502d16"></i><i style="background:#784421"></i><i style="background:#a05a2c"></i><i style="background:#c87137"></i><i style="background:#d38d5f"></i><i style="background:#deaa87"></i><i style="background:#e9c6af"></i><i style="background:#f4e3d7"></i><i style="background:#241f1c"></i><i style="background:#483e37"></i><i style="background:#6c5d53"></i><i style="background:#917c6f"></i><i style="background:#ac9d93"></i><i style="background:#c8beb7"></i><i style="background:#e3dedb"></i><i style="background:#2b2200"></i><i style="background:#540"></i><i style="background:#806600"></i><i style="background:#a80"></i><i style="background:#d4aa00"></i><i style="background:#fc0"></i><i style="background:#ffd42a"></i><i style="background:#fd5"></i><i style="background:#ffe680"></i><i style="background:#fea"></i><i style="background:#fff6d5"></i><i style="background:#28220b"></i><i style="background:#504416"></i><i style="background:#786721"></i><i style="background:#a0892c"></i><i style="background:#c8ab37"></i><i style="background:#d3bc5f"></i><i style="background:#decd87"></i><i style="background:#e9ddaf"></i><i style="background:#f4eed7"></i><i style="background:#24221c"></i><i style="background:#484537"></i><i style="background:#6c6753"></i><i style="background:#918a6f"></i><i style="background:#aca793"></i><i style="background:#c8c4b7"></i><i style="background:#e3e2db"></i><i style="background:#222b00"></i><i style="background:#450"></i><i style="background:#668000"></i><i style="background:#8a0"></i><i style="background:#aad400"></i><i style="background:#cf0"></i><i style="background:#d4ff2a"></i><i style="background:#df5"></i><i style="background:#e5ff80"></i><i style="background:#efa"></i><i style="background:#f6ffd5"></i><i style="background:#22280b"></i><i style="background:#445016"></i><i style="background:#677821"></i><i style="background:#89a02c"></i><i style="background:#abc837"></i><i style="background:#bcd35f"></i><i style="background:#cdde87"></i><i style="background:#dde9af"></i><i style="background:#eef4d7"></i><i style="background:#22241c"></i><i style="background:#454837"></i><i style="background:#676c53"></i><i style="background:#8a916f"></i><i style="background:#a7ac93"></i><i style="background:#c4c8b7"></i><i style="background:#e2e3db"></i><i style="background:#112b00"></i><i style="background:#250"></i></div>
</body></html>
